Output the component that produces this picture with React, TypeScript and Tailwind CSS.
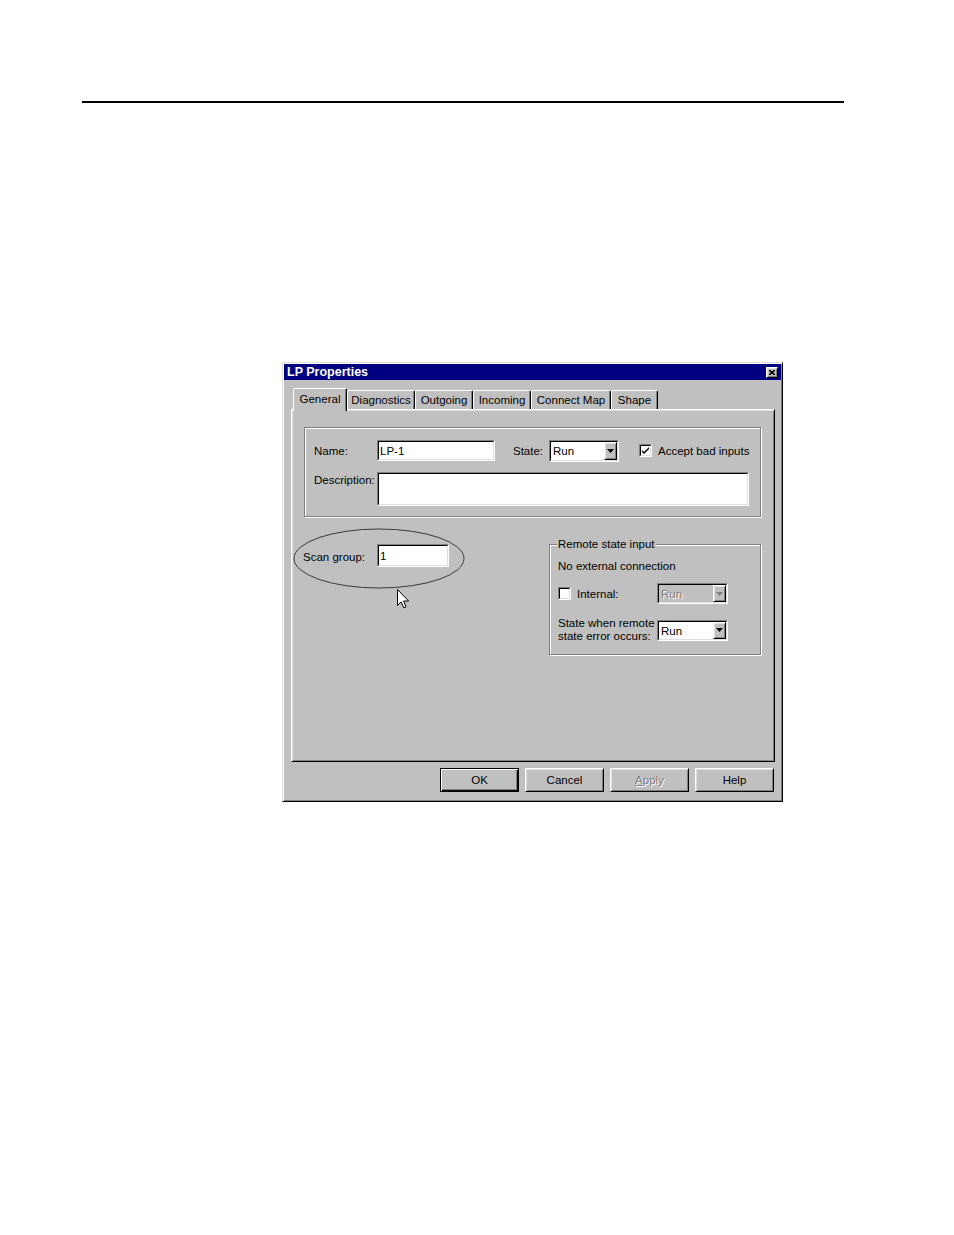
import React from "react";

// classic win9x bevels
const raised =
  "border border-t-white border-l-white border-r-black border-b-black shadow-[inset_1px_1px_#dfdfdf,inset_-1px_-1px_#808080]";
const sunkenOuter = "border border-t-[#808080] border-l-[#808080] border-r-white border-b-white";
const sunkenInner = "border border-t-black border-l-black border-r-[#dfdfdf] border-b-[#dfdfdf]";
const etched = "border border-[#808080] shadow-[inset_1px_1px_#fff,1px_1px_#fff]";

function TextField({ value, className, top }: { value?: string; className: string; top?: boolean }) {
  return (
    <div className={`${sunkenOuter} ${className}`}>
      <div
        className={`${sunkenInner} flex h-full w-full bg-white pl-[1px] ${top ? "items-start" : "items-center pt-[1px]"}`}
      >
        {value}
      </div>
    </div>
  );
}

function Arrow({ disabled }: { disabled?: boolean }) {
  return (
    <svg width="7" height="4" viewBox="0 0 7 4">
      <path d="M0 0h7L3.5 4z" fill={disabled ? "#808080" : "#000"} />
    </svg>
  );
}

function Combo({ value, disabled, className }: { value: string; disabled?: boolean; className: string }) {
  return (
    <div className={`${sunkenOuter} ${className}`}>
      <div className={`${sunkenInner} flex h-full w-full ${disabled ? "bg-[#c0c0c0]" : "bg-white"}`}>
        <div
          className={`flex flex-1 items-center pl-[2px] pt-[1px] ${disabled ? "text-[#808080] [text-shadow:1px_1px_#fff]" : ""}`}
        >
          {value}
        </div>
        <div className={`${raised} flex w-[13px] items-center justify-center bg-[#c0c0c0]`}>
          <Arrow disabled={disabled} />
        </div>
      </div>
    </div>
  );
}

function CheckBox({ checked }: { checked?: boolean }) {
  return (
    <div className={`${sunkenOuter} h-[13px] w-[13px] shrink-0`}>
      <div className={`${sunkenInner} flex h-full w-full items-center justify-center bg-white`}>
        {checked && (
          <svg width="7" height="7" viewBox="0 0 7 7">
            <path d="M0 3l2 2 5-5v2l-5 5-2-2z" fill="#000" />
          </svg>
        )}
      </div>
    </div>
  );
}

function Tab({ label, width, selected }: { label: string; width: string; selected?: boolean }) {
  if (selected) {
    return (
      <div
        className={`relative z-10 -mb-[2px] flex h-[23px] items-center justify-center rounded-t-[2px] border-l border-t border-r border-l-white border-t-white border-r-black bg-[#c0c0c0] pb-[3px] shadow-[inset_-1px_0_#808080] ${width}`}
      >
        {label}
      </div>
    );
  }
  return (
    <div
      className={`flex h-[19px] items-center justify-center rounded-t-[2px] border-l border-t border-r border-l-white border-t-white border-r-black bg-[#c0c0c0] shadow-[inset_-1px_0_#808080] ${width}`}
    >
      {label}
    </div>
  );
}

function Button({ children, isDefault }: { children: React.ReactNode; isDefault?: boolean }) {
  const cls = isDefault
    ? "border border-black shadow-[inset_1px_1px_#fff,inset_-1px_-1px_#000,inset_-2px_-2px_#808080]"
    : raised;
  return <div className={`${cls} flex h-[24px] w-[79px] items-center justify-center`}>{children}</div>;
}

function Cursor() {
  return (
    <svg width="13" height="20" viewBox="0 0 13 20" className="absolute left-[94px] top-[46px]">
      <path
        d="M0.5 0.5V16.5L4.2 12.9L6.7 18.8L9 17.8L6.6 12H11.6Z"
        fill="#fff"
        stroke="#000"
        strokeWidth="1"
        strokeLinejoin="miter"
      />
    </svg>
  );
}

function PropertiesDialog() {
  return (
    <div className="ml-[282px] mt-[259px] flex h-[440px] w-[501px] flex-col border border-t-[#dfdfdf] border-l-[#dfdfdf] border-r-black border-b-black bg-[#c0c0c0] p-px shadow-[inset_1px_1px_#fff,inset_-1px_-1px_#808080]">
      <div className="flex h-[16px] items-center justify-between bg-[#000080] pl-[3px] pr-[3px]">
        <span className="text-[12.5px] font-bold leading-[16px] text-white">LP Properties</span>
        <div className={`${raised} flex h-[11px] w-[12px] items-center justify-center bg-[#c0c0c0]`}>
          <svg width="6" height="5" viewBox="0 0 6 5">
            <path d="M0 0L6 5M6 0L0 5" stroke="#000" strokeWidth="1.6" />
          </svg>
        </div>
      </div>

      <div className="pl-[7px] pr-[6px] pt-[8px]">
        {/* tab strip */}
        <div className="flex h-[21px] items-end pl-[2px]">
          <Tab label="General" width="w-[54px]" selected />
          <Tab label="Diagnostics" width="w-[68px]" />
          <Tab label="Outgoing" width="w-[58px]" />
          <Tab label="Incoming" width="w-[58px]" />
          <Tab label="Connect Map" width="w-[80px]" />
          <Tab label="Shape" width="w-[47px]" />
        </div>

        {/* tab page */}
        <div className="h-[353px] border border-t-white border-l-white border-r-black border-b-black shadow-[inset_1px_1px_#dfdfdf,inset_-1px_-1px_#808080] p-px">
          <div className={`${etched} ml-[11px] mt-[16px] h-[90px] w-[457px] pl-[9px] pt-[12px]`}>
            <div className="flex h-[21px] items-center">
              <span className="w-[63px]">Name:</span>
              <TextField value="LP-1" className="h-[21px] w-[118px]" />
              <span className="ml-[18px] w-[36px]">State:</span>
              <Combo value="Run" className="h-[22px] w-[70px]" />
              <div className="ml-[20px]">
                <CheckBox checked />
              </div>
              <span className="ml-[6px]">Accept bad inputs</span>
            </div>
            <div className="mt-[11px] flex items-start">
              <span className="w-[63px] pt-[1px]">Description:</span>
              <TextField className="h-[34px] w-[372px]" top />
            </div>
          </div>

          <div className="ml-[10px] mt-[26px] flex w-[458px] items-start justify-between">
            <div className="relative flex items-center pt-[1px]">
              <span className="w-[74px] pt-[2px]">Scan group:</span>
              <TextField value="1" className="h-[23px] w-[72px]" />
              <svg width="172" height="62" viewBox="0 0 172 62" className="absolute -left-[10px] -top-[15px]">
                <ellipse cx="86" cy="30.5" rx="85" ry="29.5" fill="none" stroke="#3a3a3a" strokeWidth="1" />
              </svg>
              <Cursor />
            </div>

            <div className={`${etched} relative mt-[1px] h-[111px] w-[212px] pl-[8px] pt-[15px]`}>
              <span className="absolute -top-[8px] left-[7px] bg-[#c0c0c0] px-[1px]">Remote state input</span>
              <div className="leading-[13px]">No external connection</div>
              <div className="mt-[10px] flex items-center">
                <CheckBox />
                <span className="ml-[6px] w-[80px]">Internal:</span>
                <Combo value="Run" disabled className="h-[21px] w-[71px]" />
              </div>
              <div className="mt-[13px] flex items-center">
                <div className="w-[99px] leading-[13px]">
                  State when remote
                  <br />
                  state error occurs:
                </div>
                <Combo value="Run" className="h-[21px] w-[71px]" />
              </div>
            </div>
          </div>
        </div>

        {/* buttons */}
        <div className="mr-[1px] mt-[6px] flex justify-end gap-[6px]">
          <Button isDefault>OK</Button>
          <Button>Cancel</Button>
          <Button>
            <span className="text-[#808080] [text-shadow:1px_1px_#fff]">
              <span className="underline">A</span>pply
            </span>
          </Button>
          <Button>Help</Button>
        </div>
      </div>
    </div>
  );
}

export default function App() {
  return (
    <div className="h-[1235px] w-[954px] overflow-hidden bg-white font-['Liberation_Sans',Arial,sans-serif] text-[11.5px] leading-[14px] text-black">
      <div className="ml-[82px] pt-[101px]">
        <div className="h-[2px] w-[762px] bg-black" />
      </div>
      <PropertiesDialog />
    </div>
  );
}
